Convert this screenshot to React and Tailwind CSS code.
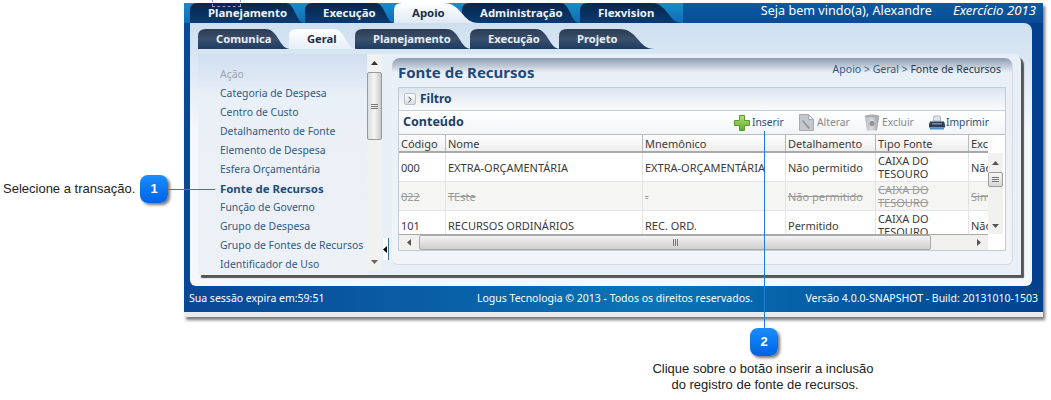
import { ChevronRight } from 'lucide-react';

const topTabs = [
  { label: 'Planejamento', cls: 'w-[115px]', w: 115, tail: 20 },
  { label: 'Execução', cls: 'w-[90px]', w: 90, tail: 20 },
  { label: 'Apoio', cls: 'w-[85px] -ml-[1px] z-10', w: 85, tail: 36, active: true },
  { label: 'Administração', cls: 'w-[118px] -ml-[17px]', w: 118, tail: 20 },
  { label: 'Flexvision', cls: 'w-[103px]', w: 103, tail: 32 },
];

const subTabs = [
  { label: 'Comunica', cls: 'w-[93px]', w: 93, tail: 26 },
  { label: 'Geral', cls: 'w-[68px] -ml-[2px] z-10', w: 68, tail: 24, active: true },
  { label: 'Planejamento', cls: 'w-[117px] -ml-[2px]', w: 117, tail: 26 },
  { label: 'Execução', cls: 'w-[91px] -ml-[2px]', w: 91, tail: 26 },
  { label: 'Projeto', cls: 'w-[96px] -ml-[2px]', w: 96, tail: 36 },
];

const menu = [
  'Categoria de Despesa',
  'Centro de Custo',
  'Detalhamento de Fonte',
  'Elemento de Despesa',
  'Esfera Orçamentária',
  'Fonte de Recursos',
  'Função de Governo',
  'Grupo de Despesa',
  'Grupo de Fontes de Recursos',
  'Identificador de Uso',
];

const rows = [
  { cells: ['000', 'EXTRA-ORÇAMENTÁRIA', 'EXTRA-ORÇAMENTÁRIA', 'Não permitido', 'CAIXA DO TESOURO', 'Não'] },
  { cells: ['022', 'TEste', '-', 'Não permitido', 'CAIXA DO TESOURO', 'Sim'], off: true },
  { cells: ['101', 'RECURSOS ORDINÁRIOS', 'REC. ORD.', 'Permitido', 'CAIXA DO TESOURO', 'Não'] },
];

function Tab({ tab, h, fill, activeFill, textCls, textSize }) {
  const { w, tail } = tab;
  const d = `M0 ${h} V7 Q0 0 8 0 H${w - tail} C${w - tail * 0.45} 0 ${w - tail * 0.5} ${h} ${w} ${h} Z`;
  return (
    <div className={`relative shrink-0 flex items-center pl-[18px] ${tab.cls}`}>
      <svg className="absolute inset-0 w-full h-full" viewBox={`0 0 ${w} ${h}`}>
        <path d={d} fill={`url(#${tab.active ? activeFill : fill})`} />
      </svg>
      <span className={`relative font-bold whitespace-nowrap ${textSize} ${tab.active ? 'text-[#1c2f48]' : textCls}`}>
        {tab.label}
      </span>
    </div>
  );
}

function PlusIcon() {
  return (
    <svg width="16" height="16" viewBox="0 0 16 16">
      <path d="M5.5 .5h5v5h5v5h-5v5h-5v-5h-5v-5h5z" fill="url(#plusFill)" stroke="#5b9a2c" />
    </svg>
  );
}

function EditIcon() {
  return (
    <svg width="15" height="17" viewBox="0 0 15 17">
      <path d="M.5 .5h9l5 5v11H.5z" fill="#c4c8cc" stroke="#a6abb0" />
      <path d="M9.5 .5v5h5z" fill="#e6e8ea" stroke="#a6abb0" />
      <path d="M4 6l7 8-1.5 1L3 7z" fill="#8f9499" />
    </svg>
  );
}

function TrashIcon() {
  return (
    <svg width="16" height="17" viewBox="0 0 16 17">
      <ellipse cx="8" cy="2.5" rx="7.5" ry="2" fill="#a9adb1" />
      <path d="M1 3.5h14l-2 13H3z" fill="url(#trashFill)" />
      <circle cx="8" cy="9.5" r="2.5" fill="#8f9397" />
    </svg>
  );
}

function PrinterIcon() {
  return (
    <svg width="16" height="15" viewBox="0 0 16 15">
      <path d="M5 1h6l1 5H4z" fill="#dbe6f0" stroke="#7d95ad" strokeWidth=".6" />
      <path d="M1 6.5h14l1 3v3H0v-3z" fill="#2d3f57" />
      <path d="M1 12.5h14V14.5H1z" fill="#4a90c8" />
      <path d="M3 8h10v1.5H3z" fill="#7b8ea3" />
    </svg>
  );
}

function Arrow({ dir, cls = 'text-[#555]' }) {
  const pts = { up: '0,4 3.5,0 7,4', down: '0,0 3.5,4 7,0', left: '4,0 0,3.5 4,7', right: '0,0 4,3.5 0,7' }[dir];
  const size = dir === 'up' || dir === 'down' ? { width: 7, height: 4 } : { width: 4, height: 7 };
  return (
    <svg {...size} className={cls}>
      <polygon points={pts} fill="currentColor" />
    </svg>
  );
}

function Grip({ vertical }) {
  return vertical ? (
    <div className="flex flex-col gap-[1px]">
      <div className="w-[7px] h-[1px] bg-[#777]" />
      <div className="w-[7px] h-[1px] bg-[#777]" />
      <div className="w-[7px] h-[1px] bg-[#777]" />
    </div>
  ) : (
    <div className="flex gap-[1px]">
      <div className="w-[1px] h-[7px] bg-[#777]" />
      <div className="w-[1px] h-[7px] bg-[#777]" />
      <div className="w-[1px] h-[7px] bg-[#777]" />
    </div>
  );
}

function Badge({ n, cls }) {
  return (
    <div className={`absolute w-[28px] h-[28px] rounded-[8px] bg-gradient-to-b from-[#1b8dfb] to-[#0062e6] shadow-[2px_2px_3px_#777] flex items-center justify-center text-white font-bold text-[13px] ${cls}`}>
      {n}
    </div>
  );
}

export default function App() {
  return (
    <div className="relative w-[1051px] h-[400px] bg-white overflow-hidden font-['Noto_Sans',sans-serif]">
      <svg width="0" height="0" className="absolute">
        <defs>
          <linearGradient id="topDark" x1="0" y1="0" x2="0" y2="1">
            <stop offset="0" stopColor="#07264f" />
            <stop offset="1" stopColor="#0b3a70" />
          </linearGradient>
          <linearGradient id="topActive" x1="0" y1="0" x2="0" y2="1">
            <stop offset="0" stopColor="#ffffff" />
            <stop offset="1" stopColor="#dfe9f4" />
          </linearGradient>
          <linearGradient id="subDark" x1="0" y1="0" x2="0" y2="1">
            <stop offset="0" stopColor="#2b3a50" />
            <stop offset=".5" stopColor="#3a506c" />
            <stop offset="1" stopColor="#1d3b62" />
          </linearGradient>
          <linearGradient id="subActive" x1="0" y1="0" x2="0" y2="1">
            <stop offset="0" stopColor="#ffffff" />
            <stop offset="1" stopColor="#e6eef6" />
          </linearGradient>
          <linearGradient id="plusFill" x1="0" y1="0" x2="0" y2="1">
            <stop offset="0" stopColor="#b5e07c" />
            <stop offset="1" stopColor="#5fa82f" />
          </linearGradient>
          <linearGradient id="trashFill" x1="0" y1="0" x2="1" y2="0">
            <stop offset="0" stopColor="#b9bdc1" />
            <stop offset=".5" stopColor="#d7dadc" />
            <stop offset="1" stopColor="#9a9ea2" />
          </linearGradient>
        </defs>
      </svg>

      {/* focus rectangle left over above the first tab */}
      <div className="absolute left-[212px] top-[-6px] w-[29px] h-[13px] border border-dashed border-[#9a90d4] z-20" />

      <div className="ml-[184px] mt-[3px] w-[859px] shadow-[2px_3px_3px_#777]">
        <div className="bg-gradient-to-r from-[#0a4795] to-[#033f8e]">
          {/* Top navigation */}
          <div className="h-[20px] flex items-stretch bg-gradient-to-b from-[#0a5aa4] to-[#0b4a96]">
            <div className="flex pl-[6px] bg-gradient-to-b from-[#1a8ccb] to-[#0d6db3]">
              {topTabs.map(tab => (
                <Tab key={tab.label} tab={tab} h={20} fill="topDark" activeFill="topActive" textCls="text-[#eef4fa]" textSize="text-[11.4px]" />
              ))}
            </div>
            <div className="flex-1 flex items-center justify-end pr-[7px] gap-[21px] text-white text-[12.6px] -mt-[4px]">
              <span>Seja bem vindo(a), Alexandre</span>
              <span className="italic text-[13.2px]">Exercício 2013</span>
            </div>
          </div>

          {/* Main panel */}
          <div className="ml-[6px] mr-[11px] h-[263px] pt-[6px] pl-[8px] pr-[11px] rounded-tr-[8px] rounded-b-[6px] bg-gradient-to-b from-[#cddff0] via-[#f4f7fb] via-40% to-[#f4f7fb]">
            <div className="h-[20px] flex">
              {subTabs.map(tab => (
                <Tab key={tab.label} tab={tab} h={20} fill="subDark" activeFill="subActive" textCls="text-[#e8eef5]" textSize="text-[11.2px]" />
              ))}
            </div>

            <div className="relative mt-[5px] h-[221px] flex rounded-tr-[8px] bg-[#e9eff6] shadow-[3px_3px_1px_#555]">
              {/* Sidebar */}
              <div className="w-[169px] h-full pt-[11px] overflow-hidden bg-gradient-to-b from-[#cfdff0] via-[#eaf0f7] via-20% to-[#edf1f6] text-[10.4px] text-[#2f5a85]">
                <div className="h-[19px] pl-[22px] flex items-center text-[#9ca6b1]">Ação</div>
                {menu.map(item => (
                  <div key={item} className={`h-[19px] pl-[22px] flex items-center whitespace-nowrap ${item === 'Fonte de Recursos' ? 'font-bold text-[11.4px] text-[#1f4c7a]' : ''}`}>
                    {item}
                  </div>
                ))}
              </div>
              <div className="w-[15px] h-[216px] flex flex-col bg-[#f1f1ef]">
                <div className="h-[18px] flex items-center justify-center"><Arrow dir="up" cls="text-[#333]" /></div>
                <div className="h-[68px] rounded-[2px] border border-[#9a9a9a] bg-gradient-to-r from-[#dcdcdc] via-[#f4f4f4] to-[#c8c8c8] flex items-center justify-center">
                  <Grip vertical />
                </div>
                <div className="flex-1" />
                <div className="h-[16px] flex items-center justify-center"><Arrow dir="down" cls="text-[#666]" /></div>
              </div>
              <div className="absolute left-[185px] top-[184px] w-[6px] h-[22px] bg-white border-r border-[#3f6f9f] flex items-center z-10">
                <Arrow dir="left" cls="text-black" />
              </div>

              {/* Content */}
              <div className="ml-[10px] mt-[4px] w-[621px] h-[207px] flex flex-col rounded-t-[8px] rounded-b-[6px] border-b border-r border-[#d5dbe2] bg-gradient-to-b from-[#8c9cb1] via-[#e9eff6] via-[7%] to-[#f1f4f8]">
                <div className="h-[29px] shrink-0 flex items-end justify-between pl-[6px] pr-[11px] pb-[6px]">
                  <span className="font-bold text-[15px] leading-[18px] text-[#1c4a7d]">Fonte de Recursos</span>
                  <span className="text-[10.5px] mb-[3px] text-[#2d5a86]">
                    Apoio &gt; Geral &gt; <span className="text-[#2a3b4d]">Fonte de Recursos</span>
                  </span>
                </div>

                <div className="ml-[6px] w-[608px] border border-[#c3ccd6] bg-white">
                  <div className="h-[23px] flex items-center pl-[5px] gap-[4px] border-b border-[#c3ccd6] bg-gradient-to-b from-[#dbe5f0] to-[#fafcfe]">
                    <div className="w-[12px] h-[12px] rounded-[2px] border border-[#b9bfc6] bg-gradient-to-b from-white to-[#d8dce1] flex items-center justify-center">
                      <ChevronRight size={11} strokeWidth={2} className="text-[#222]" />
                    </div>
                    <span className="font-bold text-[12px] text-[#1c3f66]">Filtro</span>
                  </div>
                  <div className="h-[24px] flex items-center pl-[4px] pr-[11px] border-b border-[#b5bcc4] bg-gradient-to-b from-[#ffffff] to-[#f1f4f7]">
                    <span className="font-bold text-[12.5px] text-[#1c3f66]">Conteúdo</span>
                    <div className="ml-auto w-[65px] flex items-center gap-[2px] text-[10.3px] text-[#2d4f73]">
                      <PlusIcon />
                      <span>Inserir</span>
                    </div>
                    <div className="w-[65px] flex items-center gap-[3px] text-[10.3px] text-[#858a90]">
                      <EditIcon />
                      <span>Alterar</span>
                    </div>
                    <div className="w-[65px] flex items-center gap-[2px] text-[10.3px] text-[#858a90]">
                      <TrashIcon />
                      <span>Excluir</span>
                    </div>
                    <div className="w-[65px] flex items-center gap-[1px] text-[10.3px] text-[#2d4f73]">
                      <PrinterIcon />
                      <span>Imprimir</span>
                    </div>
                  </div>

                  <div className="flex h-[99px] overflow-hidden">
                    <div className="w-[589px] shrink-0 text-[11px] leading-[13px] text-[#3a3a3a]">
                      <div className="h-[18px] grid grid-cols-[47px_197px_143px_90px_93px_19px] items-stretch border-b-2 border-[#a8a8a8] bg-gradient-to-b from-white to-[#eeeeee]">
                        {['Código', 'Nome', 'Mnemônico', 'Detalhamento', 'Tipo Fonte', 'Exc'].map(h => (
                          <div key={h} className="pl-[2px] flex items-center overflow-hidden whitespace-nowrap border-r border-[#b9b9b9] last:border-r-0">{h}</div>
                        ))}
                      </div>
                      {rows.map(row => (
                        <div key={row.cells[0]} className={`h-[29px] grid grid-cols-[47px_197px_143px_90px_93px_19px] border-b border-[#e4e4e4] ${row.off ? 'bg-[#f5f5f4] text-[#9a9a9a] line-through' : 'bg-white'}`}>
                          {row.cells.map((c, i) => (
                            <div key={i} className={`pl-[2px] flex items-center overflow-hidden border-r border-[#e4e4e4] last:border-r-0 ${i === 5 ? 'whitespace-nowrap' : ''}`}>{c}</div>
                          ))}
                        </div>
                      ))}
                    </div>
                    <div className="mt-[18px] w-[15px] h-[81px] flex flex-col items-center bg-[#f1f1ef]">
                      <div className="h-[19px] flex items-center"><Arrow dir="up" /></div>
                      <div className="w-[15px] h-[15px] rounded-[2px] border border-[#9a9a9a] bg-gradient-to-b from-[#f6f6f6] to-[#d6d6d6] flex items-center justify-center">
                        <Grip vertical />
                      </div>
                      <div className="flex-1" />
                      <div className="h-[16px] flex items-center"><Arrow dir="down" /></div>
                    </div>
                  </div>

                  <div className="h-[16px] w-[589px] flex items-center border-t border-[#a8a8a8] bg-[#f0f0ee]">
                    <div className="w-[20px] flex justify-center"><Arrow dir="left" /></div>
                    <div className="w-[512px] h-full rounded-[2px] border border-[#a9a9a9] bg-gradient-to-b from-[#f4f4f4] to-[#cfcfcf] flex items-center justify-center">
                      <Grip />
                    </div>
                    <div className="flex-1 flex justify-center pl-[38px]"><Arrow dir="right" /></div>
                  </div>
                </div>
              </div>
            </div>
          </div>

          {/* Footer */}
          <div className="h-[26px] flex items-center pl-[5px] pr-[5px] text-[10.5px] text-white bg-gradient-to-r from-[#0a4795] via-[#0a74b6] via-55% to-[#04418f]">
            <span className="w-[288px] shrink-0">Sua sessão expira em:59:51</span>
            <span>Logus Tecnologia © 2013 - Todos os direitos reservados.</span>
            <span className="ml-auto">Versão 4.0.0-SNAPSHOT - Build: 20131010-1503</span>
          </div>
        </div>
        <div className="h-[5px] bg-[#e9ebee]" />
      </div>

      {/* Callout 1 */}
      <div className="absolute left-[3px] top-[181px] text-[13px] leading-[16px] text-[#222] font-['Liberation_Sans',sans-serif]">Selecione a transação.</div>
      <div className="absolute left-[165px] top-[189px] w-[50px] h-[1px] bg-[#1f7fd4]" />
      <Badge n="1" cls="left-[140px] top-[175px] font-['Liberation_Sans',sans-serif]" />

      {/* Callout 2 */}
      <div className="absolute left-[764px] top-[131px] w-[1px] h-[198px] bg-[#1f7fd4]" />
      <Badge n="2" cls="left-[750px] top-[328px] font-['Liberation_Sans',sans-serif]" />
      <div className="absolute left-[632px] top-[361px] w-[262px] text-center text-[13px] leading-[16px] text-[#222] font-['Liberation_Sans',sans-serif]">
        Clique sobre o botão inserir a inclusão<br /><span className="pl-[4px]">do registro de fonte de recursos.</span>
      </div>
    </div>
  );
}
